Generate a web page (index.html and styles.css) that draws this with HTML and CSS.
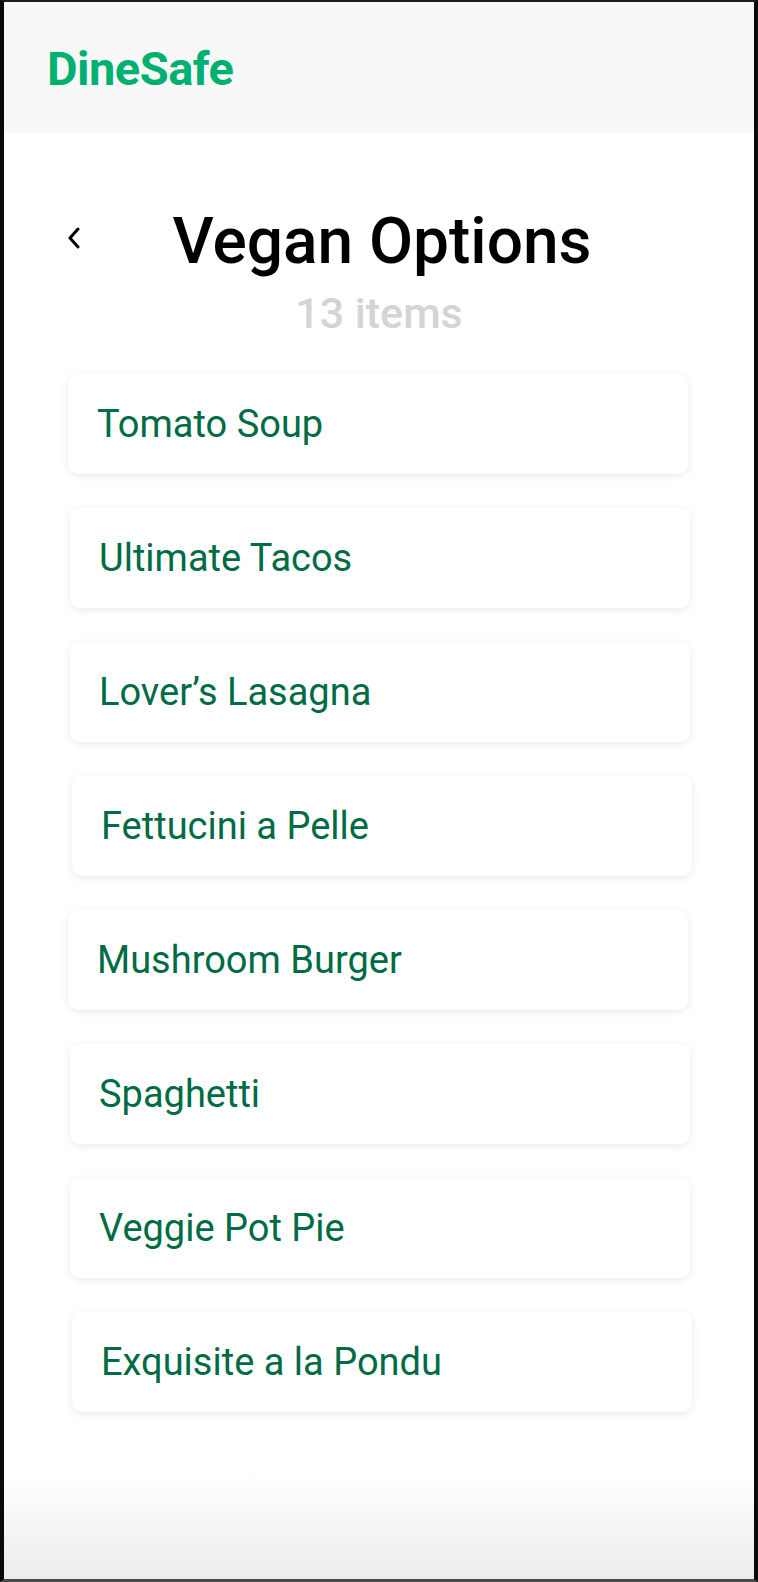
FILE: index.html
```html
<!DOCTYPE html>
<html lang="en">
<head>
<meta charset="utf-8">
<title>DineSafe - Vegan Options</title>
<link rel="stylesheet" href="styles.css">
</head>
<body>
<div class="frame">
  <header class="topbar">
    <div class="logo">DineSafe</div>
  </header>
  <main class="content">
    <div class="title-row">
      <button class="back" aria-label="Back">
        <svg width="14" height="22" viewBox="0 0 14 22"><polyline points="11,2 3,11 11,20" fill="none" stroke="#000" stroke-width="3" stroke-linecap="round" stroke-linejoin="round"/></svg>
      </button>
      <h1 class="title">Vegan Options</h1>
    </div>
    <div class="count">13 items</div>
    <ul class="list">
      <li class="card">Tomato Soup</li>
      <li class="card shift-2">Ultimate Tacos</li>
      <li class="card shift-2">Lover’s Lasagna</li>
      <li class="card shift-4">Fettucini a Pelle</li>
      <li class="card">Mushroom Burger</li>
      <li class="card shift-2">Spaghetti</li>
      <li class="card shift-2">Veggie Pot Pie</li>
      <li class="card shift-4">Exquisite a la Pondu</li>
    </ul>
  </main>
</div>
</body>
</html>
```

FILE: styles.css
```css
* { box-sizing: border-box; }
html, body { margin: 0; padding: 0; }
body { font-family: Roboto, "Noto Sans", sans-serif; background: #000; }

.frame {
  width: 758px;
  height: 1582px;
  border-top: 2px solid #1e1e1e;
  border-left: 4px solid #0a0a0a;
  border-right: 4px solid #0a0a0a;
  border-bottom: 3px solid #4a4a4a;
  background: linear-gradient(to bottom, #ffffff 0, #ffffff 1470px, #ececec 1577px);
  display: flex;
  flex-direction: column;
  overflow: hidden;
}

.topbar {
  height: 131px;
  background: #f8f8f8;
  display: flex;
  align-items: center;
  padding-left: 43px;
  flex-shrink: 0;
}
.logo {
  color: #00b070;
  font-weight: 700;
  font-size: 47px;
  letter-spacing: -0.5px;
  padding-top: 2px;
}

.content { padding: 69px 0 0; }

.title-row {
  position: relative;
  display: flex;
  justify-content: center;
  align-items: center;
  height: 80px;
  padding-left: 6px;
}
.back {
  position: absolute;
  left: 63px;
  top: 25px;
  background: none;
  border: 0;
  padding: 0;
  display: flex;
}
.title {
  margin: 0;
  font-size: 64px;
  font-weight: 500;
  color: #000;
  line-height: 80px;
}
.count {
  text-align: center;
  color: #d4d4d4;
  font-weight: 500;
  font-size: 43px;
  line-height: 50px;
  margin-top: 6px;
}

.list {
  list-style: none;
  margin: 36px 0 0;
  padding: 0 0 0 64px;
  display: flex;
  flex-direction: column;
  gap: 34px;
}
.card {
  width: 620px;
  height: 100px;
  background: #fff;
  border-radius: 10px;
  box-shadow: 0 2px 9px rgba(0,0,0,0.09);
  display: flex;
  align-items: center;
  padding-left: 29px;
  color: #006b45;
  font-size: 38px;
}
.shift-2 { margin-left: 2px; }
.shift-4 { margin-left: 4px; }
```
